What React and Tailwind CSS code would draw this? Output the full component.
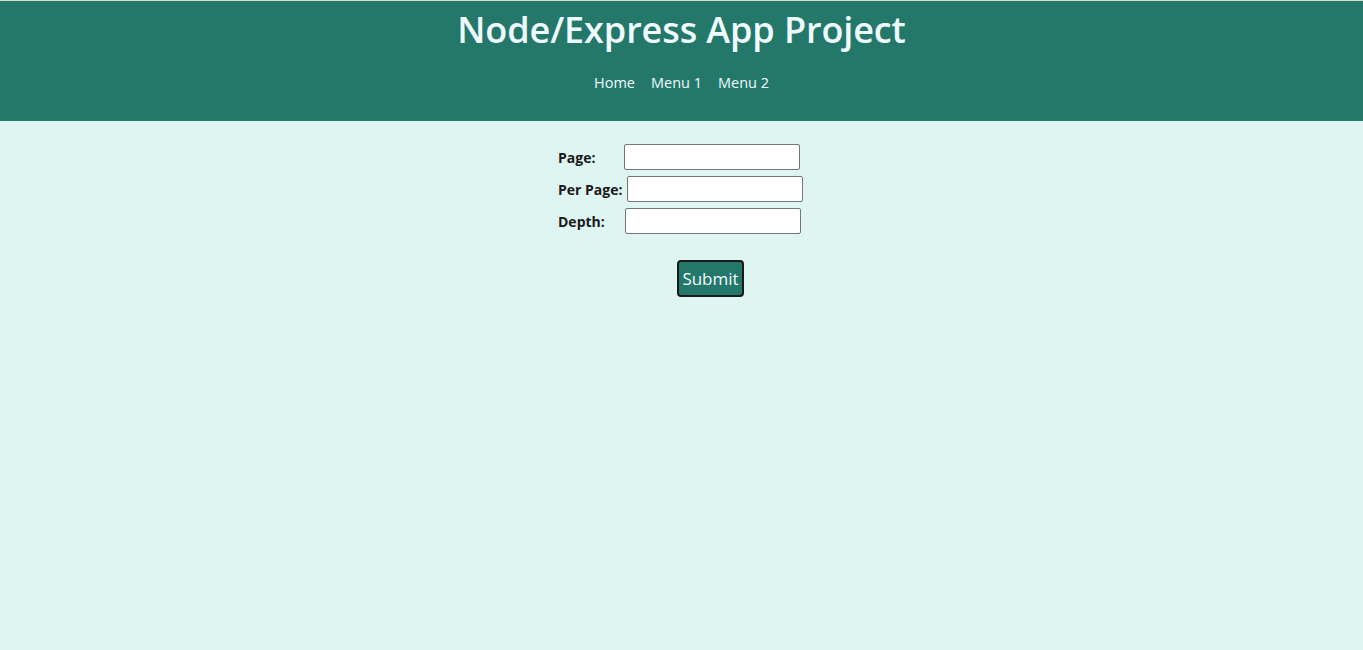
import React from 'react';

function App() {
    return (
        <div className="min-h-screen w-full bg-[#dff5f1] font-['Open_Sans',sans-serif] border-t border-[#d9d9d9]">
            {/* Header */}
            <header className="bg-[#24786a] h-[120px] flex flex-col items-center">
                <h1 className="text-[#f0fbff] text-[36px] font-semibold leading-none mt-[11px] tracking-[-0.1px]">
                    Node/Express App Project
                </h1>
                <nav className="flex gap-[16px] mt-[28px] text-[#f0fbff] text-[14.5px] leading-none">
                    <a href="#">Home</a>
                    <a href="#">Menu 1</a>
                    <a href="#">Menu 2</a>
                </nav>
            </header>

            {/* Form */}
            <form className="flex flex-col items-start ml-[558px] pt-[23px]">
                <div className="flex items-center h-[26px]">
                    <label className="text-[14px] font-bold text-[#1a1a1a] w-[66px]">Page:</label>
                    <input className="w-[176px] h-[26px] bg-white border border-[#767676] rounded-[2px]" />
                </div>
                <div className="flex items-center h-[26px] mt-[6px]">
                    <label className="text-[14px] font-bold text-[#1a1a1a] w-[69px]">Per Page:</label>
                    <input className="w-[176px] h-[26px] bg-white border border-[#767676] rounded-[2px]" />
                </div>
                <div className="flex items-center h-[26px] mt-[6px]">
                    <label className="text-[14px] font-bold text-[#1a1a1a] w-[67px]">Depth:</label>
                    <input className="w-[176px] h-[26px] bg-white border border-[#767676] rounded-[2px]" />
                </div>
                <button
                    type="button"
                    className="ml-[119px] mt-[26px] w-[67px] h-[37px] bg-[#24786a] text-[#f0fbff] text-[17px] border-2 border-[#1a1a1a] rounded-[4px] leading-none"
                >
                    Submit
                </button>
            </form>
        </div>
    );
}

export default App;
